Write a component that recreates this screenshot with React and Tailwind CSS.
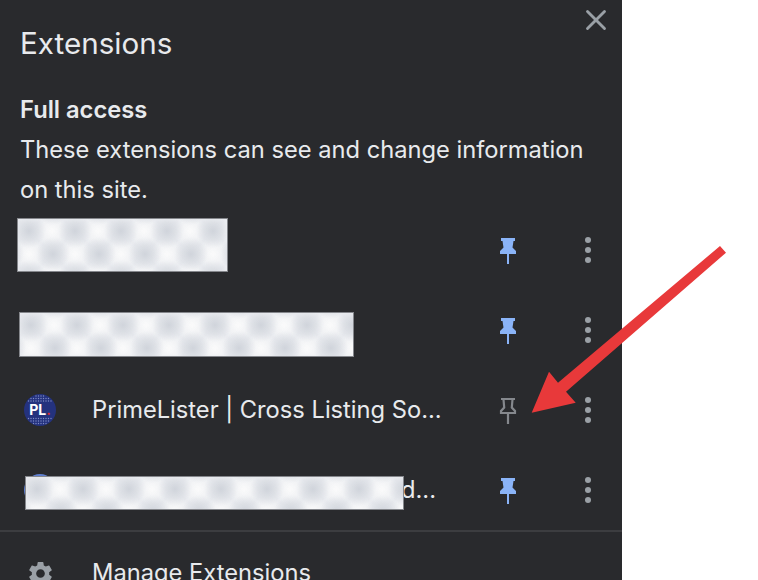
import React from 'react';
import { X } from 'lucide-react';
import { MdSettings } from 'react-icons/md';

const BLUR_BLOCK = "absolute border border-[#85878c] bg-[#eaecf0] [background-image:radial-gradient(circle,#d0d4db_0,transparent_17px),radial-gradient(circle,#d0d4db_0,transparent_17px),radial-gradient(circle,#fbfbfb_0,transparent_16px),radial-gradient(circle,#fbfbfb_0,transparent_16px)] [background-size:46px_46px] [background-position:-12px_-11px,12px_12px,11px_-11px,-12px_12px]";

const PinIcon = ({ pinned }) => (
  <svg width="18" height="28" viewBox="0 0 18 28" className="shrink-0">
    {pinned ? (
      <path d="M2 2h14v3h-1.500l-1 6.500L17 15v3h-7v10H8V18H1v-3l3.500-3.500L3.500 5H2z" fill="#8ab4f8" />
    ) : (
      <path d="M2 3h14M4.500 3.500l.7 8L2 15v2h14v-2l-3.200-3.500.7-8M9 17v11" fill="none" stroke="#85888d" strokeWidth="2.200" />
    )}
  </svg>
);

const MoreDots = () => (
  <div className="flex flex-col gap-1 w-1.5 items-center shrink-0">
    <span className="w-1.5 h-1.5 rounded-full bg-[#9aa0a6]" />
    <span className="w-1.5 h-1.5 rounded-full bg-[#9aa0a6]" />
    <span className="w-1.5 h-1.5 rounded-full bg-[#9aa0a6]" />
  </div>
);

const logoDots = [];
for (let y = 2; y < 32; y += 2.5) {
  for (let x = 2; x < 32; x += 2.5) {
    const d = Math.hypot(x - 16, y - 16);
    if (d < 15 && Math.abs(y - 16) > 8) logoDots.push([x, y]);
  }
}

const PrimeListerLogo = () => (
  <div className="relative w-8 h-8 rounded-full bg-[#24327e] flex items-center justify-center shrink-0 overflow-hidden">
    <svg width="32" height="32" viewBox="0 0 32 32" className="absolute inset-0">
      {logoDots.map(([x, y]) => (
        <circle key={`${x}-${y}`} cx={x} cy={y} r="0.7" fill="#7f8cc4" />
      ))}
    </svg>
    <span className="relative text-white font-bold text-[14px] leading-none">
      PL<span className="text-[#d8262c]">.</span>
    </span>
  </div>
);

const ExtensionRow = ({ pinned = true, icon, label, labelPad = "", children }) => (
  <div className="relative h-20 flex items-center pl-6">
    <div className="w-8 h-8 shrink-0">{icon}</div>
    <div className={`w-[349px] ml-9 text-[23.7px] text-[#e8eaed] whitespace-nowrap text-right ${labelPad}`}>{label}</div>
    <div className="ml-[58px]"><PinIcon pinned={pinned} /></div>
    <div className="ml-[68px]"><MoreDots /></div>
    {children}
  </div>
);

export default function App() {
  return (
    <div className="relative w-[758px] h-[580px] bg-white overflow-hidden" style={{ fontFamily: '"Inter", "Liberation Sans", sans-serif' }}>
      <div className="relative w-[622px] h-full bg-[#292a2d] overflow-hidden">
        <button className="absolute top-[3px] right-[9px] text-[#9aa0a6]">
          <X size={34} strokeWidth={2} />
        </button>

        <div className="px-5 pt-6">
          <h2 className="text-[29.6px] leading-[38px] text-[#e8eaed]">Extensions</h2>
          <h3 className="mt-[28px] text-[23.7px] leading-[40px] font-semibold text-[#e8eaed]">Full access</h3>
          <p className="text-[23.7px] leading-[40px] text-[#e8eaed]">These extensions can see and change information on this site.</p>
        </div>

        <div>
          <ExtensionRow label="" icon={<div className="w-8 h-8 rounded-full bg-[#5f7fd0]" />}>
            <div className={`${BLUR_BLOCK} left-[17px] top-[8px] w-[211px] h-[54px]`} />
          </ExtensionRow>
          <ExtensionRow label="" icon={<div className="w-8 h-8 rounded-full bg-[#5f7fd0]" />}>
            <div className={`${BLUR_BLOCK} left-[19px] top-[22px] w-[335px] h-[45px]`} />
          </ExtensionRow>
          <ExtensionRow pinned={false} label="PrimeLister | Cross Listing So..." icon={<PrimeListerLogo />} />
          <ExtensionRow label="d..." labelPad="pr-[5px]" icon={<div className="w-8 h-8 rounded-full bg-[#5f7fd0]" />}>
            <div className={`${BLUR_BLOCK} left-[25px] top-[26px] w-[379px] h-[34px]`} />
          </ExtensionRow>
        </div>

        <div className="border-t-2 border-[#3c3d40] flex items-center gap-[37px] pl-[26px] h-[84px]">
          <MdSettings size={29} className="text-[#9aa0a6] shrink-0" />
          <span className="text-[23.7px] text-[#e8eaed]">Manage Extensions</span>
        </div>
      </div>

      <svg width="758" height="580" viewBox="0 0 758 580" className="absolute inset-0 pointer-events-none">
        <path d="M720 246L726 252.700L566 391.700L575.700 402.700L531.700 412.700L549 371.700L558 382.700Z" fill="#e8393a" />
      </svg>
    </div>
  );
}
